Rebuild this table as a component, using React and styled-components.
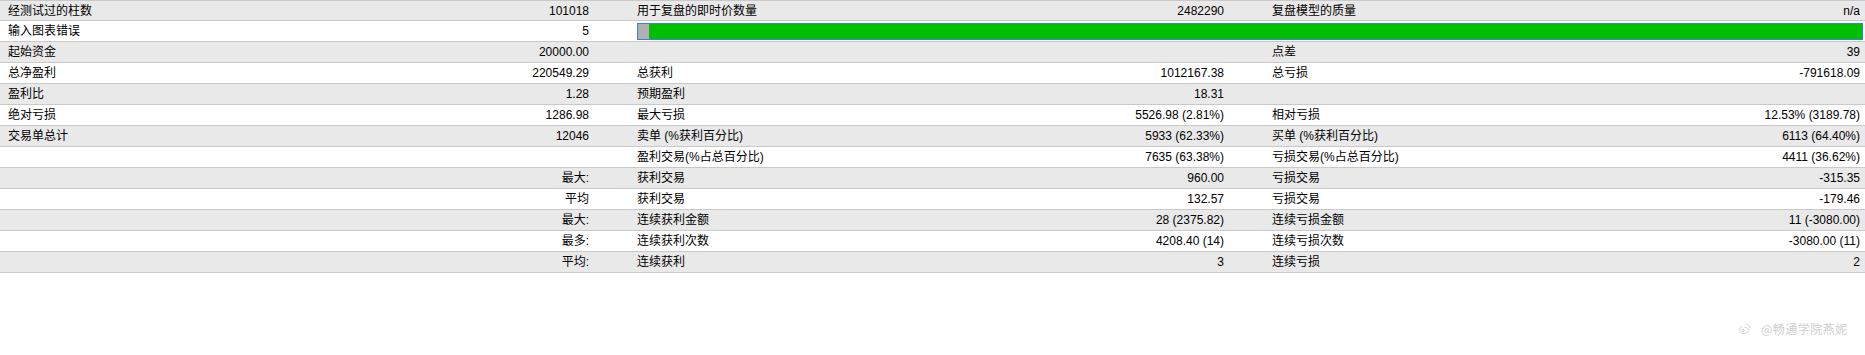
import React from "react";
import styled, { createGlobalStyle } from "styled-components";

const Global = createGlobalStyle`
  html, body { margin: 0; padding: 0; background: #ffffff; }
  body { font-family: "Liberation Sans", "Noto Sans CJK SC", sans-serif; font-size: 12px; color: #000; }
`;

const Page = styled.div`
  position: relative;
  width: 1865px;
  height: 355px;
  overflow: hidden;
`;

const Table = styled.div`
  border-top: 1px solid #c9c9c9;
`;

const Row = styled.div`
  display: grid;
  grid-template-columns: 581px 587px 588px;
  column-gap: 48px;
  padding-left: 8px;
  height: ${(p) => (p.$first ? 19 : 20)}px;
  border-bottom: 1px solid #c9c9c9;
  background: ${(p) => (p.$alt ? "#e9e9e9" : "#ffffff")};
  align-items: center;
`;

const Cell = styled.div`
  display: flex;
  justify-content: space-between;
  align-items: center;
  white-space: nowrap;
  line-height: 14px;
`;

const Label = styled.span``;
const Value = styled.span`
  text-align: right;
`;

const Bar = styled.div`
  grid-column: 2 / -1;
  margin-right: -3px;
  align-self: start;
  margin-top: 2px;
  height: 15px;
  border: 1px solid #3a82d6;
  background: #00be00;
  display: flex;
`;

const BarStart = styled.div`
  width: 11px;
  background: #b0b0b0;
`;

const Watermark = styled.div`
  position: absolute;
  left: 1738px;
  top: 320px;
  display: flex;
  align-items: center;
  gap: 10px;
  color: #cfcfcf;
  font-family: "Noto Sans CJK SC", sans-serif;
  font-size: 12px;
  letter-spacing: 0.5px;
`;

const rows = [
  [["经测试过的柱数", "101018"], ["用于复盘的即时价数量", "2482290"], ["复盘模型的质量", "n/a"]],
  "bar",
  [["起始资金", "20000.00"], ["", ""], ["点差", "39"]],
  [["总净盈利", "220549.29"], ["总获利", "1012167.38"], ["总亏损", "-791618.09"]],
  [["盈利比", "1.28"], ["预期盈利", "18.31"], ["", ""]],
  [["绝对亏损", "1286.98"], ["最大亏损", "5526.98 (2.81%)"], ["相对亏损", "12.53% (3189.78)"]],
  [["交易单总计", "12046"], ["卖单 (%获利百分比)", "5933 (62.33%)"], ["买单 (%获利百分比)", "6113 (64.40%)"]],
  [["", ""], ["盈利交易(%占总百分比)", "7635 (63.38%)"], ["亏损交易(%占总百分比)", "4411 (36.62%)"]],
  [["", "最大:"], ["获利交易", "960.00"], ["亏损交易", "-315.35"]],
  [["", "平均"], ["获利交易", "132.57"], ["亏损交易", "-179.46"]],
  [["", "最大:"], ["连续获利金额", "28 (2375.82)"], ["连续亏损金额", "11 (-3080.00)"]],
  [["", "最多:"], ["连续获利次数", "4208.40 (14)"], ["连续亏损次数", "-3080.00 (11)"]],
  [["", "平均:"], ["连续获利", "3"], ["连续亏损", "2"]],
];

function WeiboIcon() {
  return (
    <svg width="13" height="12" viewBox="0 0 13 12" fill="none" stroke="#cfcfcf" strokeWidth="1">
      <path d="M4 3.5 C1.5 5 0.8 7.5 2.5 9.2 C4.5 11 9 10.5 10.5 8.5 C11.5 7 10.5 5.8 9 5.8 C9.5 4.5 8.5 4 6.5 4.8" />
      <path d="M8.5 1.5 C10.5 1.5 12 3 11.8 5" />
      <circle cx="5" cy="7.5" r="1.2" />
    </svg>
  );
}

export default function App() {
  return (
    <Page>
      <Global />
      <Table>
        {rows.map((r, i) =>
          r === "bar" ? (
            <Row key={i} $alt={i % 2 === 0}>
              <Cell>
                <Label>输入图表错误</Label>
                <Value>5</Value>
              </Cell>
              <Bar>
                <BarStart />
              </Bar>
            </Row>
          ) : (
            <Row key={i} $alt={i % 2 === 0} $first={i === 0}>
              {r.map(([l, v], j) => (
                <Cell key={j}>
                  <Label>{l}</Label>
                  <Value>{v}</Value>
                </Cell>
              ))}
            </Row>
          )
        )}
      </Table>
      <Watermark>
        <WeiboIcon />
        <span>@畅通学院燕妮</span>
      </Watermark>
    </Page>
  );
}
